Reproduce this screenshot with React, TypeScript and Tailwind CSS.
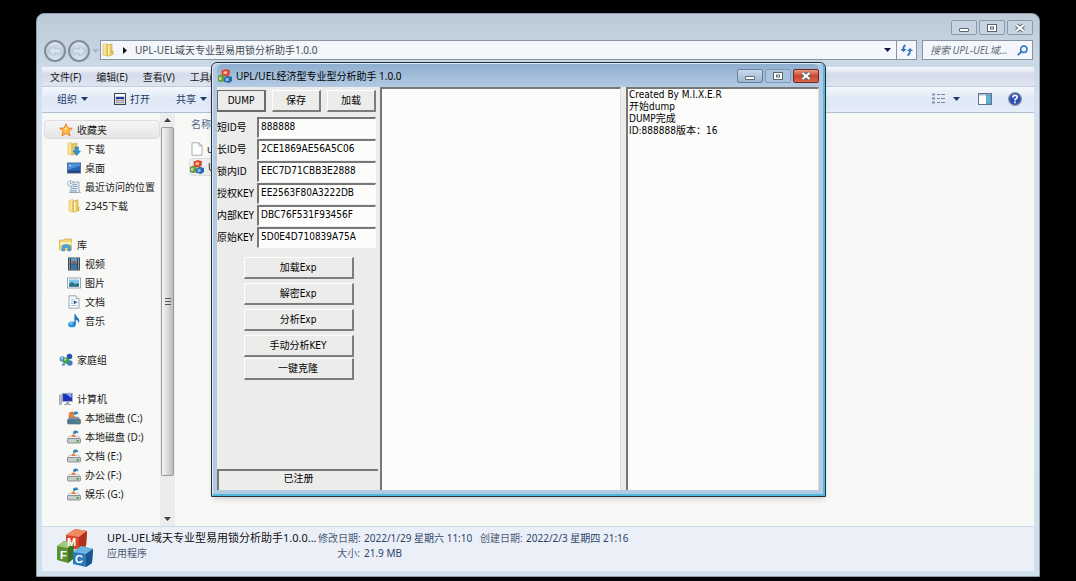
import { useState } from "react";
import type { ReactNode } from "react";

const UI_FONT = "font-['Noto_Sans','Noto_Sans_CJK_SC',sans-serif]";
const DIALOG_FONT = "font-['DejaVu_Sans_Condensed','Noto_Sans_CJK_SC',sans-serif]";

function MfcIcon({ className }: { className?: string }) {
  return (
    <svg viewBox="0 0 36 38" className={className} aria-hidden="true">
      <path d="M9 6 L18 0 L30 2 L29 17 L22 21 L9 18 Z" fill="#d9462a" />
      <path d="M9 6 L18 0 L30 2 L22 8 Z" fill="#f08b63" />
      <path d="M22 8 L30 2 L29 17 L22 21 Z" fill="#b3301c" />
      <path d="M0 17 L7 12 L17 14 L16 30 L11 34 L0 31 Z" fill="#5d9338" />
      <path d="M0 17 L7 12 L17 14 L11 19 Z" fill="#a3c876" />
      <path d="M11 19 L17 14 L16 30 L11 34 Z" fill="#3d6f27" />
      <path d="M16 23 L24 17 L36 20 L35 34 L29 38 L16 35 Z" fill="#2a7bb8" />
      <path d="M16 23 L24 17 L36 20 L29 25 Z" fill="#6cb5de" />
      <path d="M29 25 L36 20 L35 34 L29 38 Z" fill="#1a5590" />
      <g fill="#fff" fontFamily="Liberation Sans, sans-serif" fontWeight="bold" fontSize="11">
        <text x="10" y="17">M</text>
        <text x="3" y="30">F</text>
        <text x="18" y="34">C</text>
      </g>
    </svg>
  );
}

/* same cubes without letters, used at 14px */
function CubesIcon() {
  return (
    <svg viewBox="0 0 14 14" className="h-3.5 w-3.5 shrink-0" aria-hidden="true">
      <path d="M3.5 1.5 L8 0 L12 1.2 L11.5 6.2 L8 7.5 L3.8 6.5 Z" fill="#dc4a2c" />
      <path d="M5.5 2.5 L9 2 L9 5 L5.5 5 Z" fill="#f6b5a0" />
      <path d="M0 7 L3 5.5 L6.5 7 L6.5 12 L3 13 L0 12 Z" fill="#5f9a3c" />
      <path d="M1 8 L3.5 7.5 L3.5 11 L1 11 Z" fill="#b7d59a" />
      <path d="M6 9 L9.5 6.8 L14 8 L14 12 L11 14 L6 12.8 Z" fill="#2468ae" />
      <path d="M7.5 9.5 L10.5 8.5 L10.5 12 L7.5 12 Z" fill="#8fc1ea" />
    </svg>
  );
}

const svgProps = { viewBox: "0 0 14 14", className: "h-3.5 w-3.5 shrink-0", "aria-hidden": true } as const;

const StarIcon = () => (
  <svg {...svgProps}>
    <path d="M7 .8 L8.8 5 L13.3 5.3 L9.9 8.3 L11 12.8 L7 10.4 L3 12.8 L4.1 8.3 L.7 5.3 L5.2 5 Z" fill="#fcc04c" stroke="#e87f25" strokeWidth="1" />
    <path d="M7 3 L7.8 6 L5.5 7 Z" fill="#fff0b0" />
  </svg>
);

const FolderIcon = () => (
  <svg {...svgProps}>
    <path d="M2 1.5 L6 .5 L6 13 L2 12 Z" fill="#f8e59a" stroke="#d7b95a" strokeWidth=".6" />
    <path d="M6 2 L11 1 L11 12 L6 13.2 Z" fill="#eac862" stroke="#c9a447" strokeWidth=".6" />
    <path d="M7 3 L8.5 2.6 L8.5 12 L7 12.4 Z" fill="#fff3bd" />
    <path d="M11 7 L12.4 8 L12.4 12 L11 12 Z" fill="#ddb84e" />
  </svg>
);

const DownloadIcon = () => (
  <svg {...svgProps}>
    <path d="M1 1.5 L5 .5 L5 13 L1 12 Z" fill="#f8e59a" stroke="#d7b95a" strokeWidth=".6" />
    <path d="M5 2 L10 1 L10 12 L5 13 Z" fill="#eac862" stroke="#c9a447" strokeWidth=".6" />
    <path d="M8 5 H11.5 V9 H13.5 L9.8 13.6 L6 9 H8 Z" fill="#2f93dc" stroke="#1a6ab0" strokeWidth=".5" />
  </svg>
);

const DesktopIcon = () => (
  <svg {...svgProps}>
    <rect x=".5" y="2" width="13" height="10" fill="#2560b4" stroke="#59718f" />
    <path d="M1 2.5 H13 V5 L1 9 Z" fill="#4b90d8" />
    <rect x="1" y="10" width="12" height="1.5" fill="#203c66" />
    <rect x="2" y="4" width="2" height="1" fill="#d6ecff" />
  </svg>
);

const RecentIcon = () => (
  <svg {...svgProps}>
    <path d="M4 2 H12 V11 L13.5 12.5 H4 Z" fill="#dfe9f2" stroke="#8a9db0" strokeWidth=".8" />
    <path d="M6 4.5 H10 M6 6.5 H11 M5 8.5 H10" stroke="#7796b4" strokeWidth=".8" />
    <circle cx="3.5" cy="3.5" r="2.8" fill="#f5f8fb" stroke="#8c9aa8" strokeWidth=".8" />
    <path d="M3.5 2 V3.7 H4.8" fill="none" stroke="#55697d" strokeWidth=".6" />
    <path d="M2 12.5 H9 V10.5 H3" fill="#bccddd" stroke="#8a9db0" strokeWidth=".7" />
  </svg>
);

const LibraryIcon = () => (
  <svg {...svgProps}>
    <path d="M.5 2 H5 L6 1 H12.5 V12 H.5 Z" fill="#f1d678" stroke="#cfa948" strokeWidth=".7" />
    <rect x="1" y="4" width="11.5" height="3" fill="#faeeb5" />
    <path d="M3 13 V9 Q3 6.5 7 6.5 Q11.5 6.5 11.5 9 V13 H9 V9.5 H5.5 V13 Z" fill="#49a6dd" stroke="#2b7cb5" strokeWidth=".5" />
  </svg>
);

const VideoIcon = () => (
  <svg {...svgProps}>
    <rect x="1" y=".5" width="12" height="13" fill="#3f4851" />
    <rect x="4" y="1" width="6" height="5.5" fill="#5a9ecb" />
    <rect x="4" y="7.5" width="6" height="5.5" fill="#3b7aa8" />
    <path d="M4 6 L7 3.5 L10 6 Z" fill="#a54f34" />
    <path d="M2.5 1.5 V13 M11.5 1.5 V13" stroke="#d9dee2" strokeWidth="1" strokeDasharray="1 1" />
  </svg>
);

const PictureIcon = () => (
  <svg {...svgProps}>
    <rect x=".5" y="2" width="13" height="10" fill="#fff" stroke="#8d9ba8" strokeWidth=".9" />
    <rect x="2" y="3.5" width="10" height="7" fill="#7fc5ec" />
    <path d="M2 8 L5 5.8 L8 8 L12 7 V10.5 H2 Z" fill="#267c75" />
    <rect x="2" y="9.5" width="10" height="1" fill="#2564a0" />
  </svg>
);

const DocumentIcon = () => (
  <svg {...svgProps}>
    <path d="M2 .8 H9 L12 3.8 V13.2 H2 Z" fill="#f7fafc" stroke="#8592a0" strokeWidth=".8" />
    <path d="M9 .8 V3.8 H12" fill="#d7e1eb" stroke="#8592a0" strokeWidth=".6" />
    <path d="M4 4.5 H7 M4 6.5 H7 M4 8.5 H7 M4 10.5 H10" stroke="#9eb3c8" strokeWidth=".8" />
    <path d="M7 5.5 L10.5 7.2 L7 9 Z" fill="#24598f" />
  </svg>
);

const MusicIcon = () => (
  <svg {...svgProps}>
    <ellipse cx="5" cy="10.4" rx="3.8" ry="2.9" fill="#2793df" />
    <path d="M7.4 10.5 V.3 H8.6 Q8.8 2.6 11 4 Q13.4 6.4 11.4 9.8 Q11.8 6.4 8.8 5.4 V10.5 Z" fill="#1d6fc0" />
    <ellipse cx="4.2" cy="9.5" rx="1.7" ry="1" fill="#8fd2f8" />
  </svg>
);

const HomegroupIcon = () => (
  <svg {...svgProps}>
    <circle cx="3.3" cy="6" r="2.8" fill="#5a8fd8" />
    <circle cx="10.5" cy="3.5" r="2.8" fill="#2c4fb5" />
    <circle cx="10.8" cy="10" r="2.8" fill="#4478c8" />
    <circle cx="7" cy="7.6" r="3.2" fill="#37a045" />
    <circle cx="6.3" cy="6.6" r="1.2" fill="#b5e6a8" />
    <circle cx="2.8" cy="5.2" r="1" fill="#cfe2fa" />
    <circle cx="4.5" cy="11.5" r="1.6" fill="#6c97cf" />
  </svg>
);

const ComputerIcon = () => (
  <svg {...svgProps}>
    <rect x=".3" y="3" width="2.4" height="9.5" fill="#b8c2cc" stroke="#7e8b98" strokeWidth=".5" />
    <rect x="3.3" y="1.3" width="10.2" height="8.2" fill="#1d32b8" stroke="#aab6c2" strokeWidth=".9" />
    <path d="M7 2 H12.5 V6 Z" fill="#8ba5f2" />
    <path d="M7 10 H10 V12 H12 V13 H5 V12 H7 Z" fill="#9eabb8" />
  </svg>
);

const DriveIcon = ({ system }: { system?: boolean }) => (
  <svg {...svgProps}>
    {system && <path d="M2 1.5 L6 .3 V7 H1.5 Z" fill="#e5802d" />}
    <path d="M2.5 6 H11.5 L13.5 9 H.5 Z" fill={system ? "#6f97b8" : "#eef0f1"} stroke="#949b9f" strokeWidth=".5" />
    <rect x=".5" y="8.5" width="13" height="4.5" rx="1" fill={system ? "#4b7796" : "#c7cccd"} stroke="#697277" strokeWidth=".7" />
    <rect x="9.5" y="10" width="2.5" height="1.6" fill="#4aa13c" />
    <path d="M6 3.5 Q5.8 .4 8.8 .4 Q11.8 .6 11.2 3.5 Q9.7 2 8.5 4 Z" fill="#2f83bd" />
    <path d="M4 6.8 L6.5 3.8 L9 7 Z" fill="#e57a35" />
  </svg>
);

interface TreeItem {
  label: string;
  icon: ReactNode;
}

interface TreeGroup extends TreeItem {
  selected?: boolean;
  items: TreeItem[];
}

const TREE: TreeGroup[] = [
  {
    label: "收藏夹",
    icon: <StarIcon />,
    selected: true,
    items: [
      { label: "下载", icon: <DownloadIcon /> },
      { label: "桌面", icon: <DesktopIcon /> },
      { label: "最近访问的位置", icon: <RecentIcon /> },
      { label: "2345下载", icon: <FolderIcon /> },
    ],
  },
  {
    label: "库",
    icon: <LibraryIcon />,
    items: [
      { label: "视频", icon: <VideoIcon /> },
      { label: "图片", icon: <PictureIcon /> },
      { label: "文档", icon: <DocumentIcon /> },
      { label: "音乐", icon: <MusicIcon /> },
    ],
  },
  { label: "家庭组", icon: <HomegroupIcon />, items: [] },
  {
    label: "计算机",
    icon: <ComputerIcon />,
    items: [
      { label: "本地磁盘 (C:)", icon: <DriveIcon system /> },
      { label: "本地磁盘 (D:)", icon: <DriveIcon /> },
      { label: "文档 (E:)", icon: <DriveIcon /> },
      { label: "办公 (F:)", icon: <DriveIcon /> },
      { label: "娱乐 (G:)", icon: <DriveIcon /> },
    ],
  },
];

const FIELDS = [
  { id: "short-id", label: "短ID号", value: "888888" },
  { id: "long-id", label: "长ID号", value: "2CE1869AE56A5C06" },
  { id: "lock-id", label: "锁内ID", value: "EEC7D71CBB3E2888" },
  { id: "auth-key", label: "授权KEY", value: "EE2563F80A3222DB" },
  { id: "inner-key", label: "内部KEY", value: "DBC76F531F93456F" },
  { id: "origin-key", label: "原始KEY", value: "5D0E4D710839A75A" },
];

const LOG = "Created By M.I.X.E.R\n开始dump\nDUMP完成\nID:888888版本：16";

function Caret({ className = "text-[#1e3a6b]" }: { className?: string }) {
  return (
    <svg viewBox="0 0 7 4" className={`h-1 w-[7px] shrink-0 ${className}`} aria-hidden="true">
      <path d="M0 0 H7 L3.5 4 Z" fill="currentColor" />
    </svg>
  );
}

function CaptionGlyph({ kind }: { kind: "min" | "max" | "close" }) {
  return (
    <svg viewBox="0 0 12 10" className="h-2.5 w-3" aria-hidden="true">
      {kind === "min" && <rect x="1.5" y="5.5" width="9" height="3" rx=".5" fill="#fff" stroke="#5b6673" />}
      {kind === "max" && (
        <>
          <rect x="1.5" y="1.5" width="9" height="7" fill="#fff" stroke="#5b6673" />
          <rect x="4.5" y="4" width="3" height="2" fill="#fff" stroke="#5b6673" />
        </>
      )}
      {kind === "close" && (
        <>
          <path d="M2.5 2 L9.5 8 M9.5 2 L2.5 8" stroke="#5b6673" strokeWidth="4" />
          <path d="M2.5 2 L9.5 8 M9.5 2 L2.5 8" stroke="#fff" strokeWidth="2.2" />
        </>
      )}
    </svg>
  );
}

function NavButton({ label, flip }: { label: string; flip?: boolean }) {
  return (
    <button
      aria-label={label}
      className="flex h-[22px] w-[22px] items-center justify-center rounded-full border-2 border-[#7f8d9c] bg-linear-to-b from-[#dfe7ef] via-[#bccbda] to-[#dbe7f2]"
    >
      <svg viewBox="0 0 14 12" className="h-3 w-3.5" aria-hidden="true">
        <path
          d={flip ? "M13 6 L7.5 1 V4 H1 V8 H7.5 V11 Z" : "M1 6 L6.5 1 V4 H13 V8 H6.5 V11 Z"}
          fill="#d9e3ed"
          stroke="#b3c1cf"
          strokeWidth=".7"
        />
      </svg>
    </button>
  );
}

function Sidebar() {
  return (
    <aside className="flex w-[133px] shrink-0">
      <nav className="flex min-w-0 flex-1 flex-col gap-5 pt-[7px] pl-0.5">
        {TREE.map((group) => (
          <ul key={group.label}>
            <li
              className={
                group.selected
                  ? "flex h-[19px] items-center gap-1 rounded-sm border border-[#dcdcdc] bg-linear-to-b from-[#f6f6f6] to-[#e5e5e5] pl-3.5"
                  : "flex h-[19px] items-center gap-1 border border-transparent pl-3.5"
              }
            >
              {group.icon}
              {group.label}
            </li>
            {group.items.map((item) => (
              <li key={item.label} className="flex h-[19px] items-center gap-1 pl-[23px] whitespace-nowrap">
                {item.icon}
                {item.label}
              </li>
            ))}
          </ul>
        ))}
      </nav>
      <div className="flex w-[15px] flex-col items-center bg-[#ececec]">
        <span className="flex h-3.5 items-center">
          <Caret className="rotate-180 text-[#404040]" />
        </span>
        <div className="flex w-[13px] grow items-center justify-center rounded-xs border border-[#9a9a9a] bg-linear-to-r from-[#f5f5f5] via-[#dcdcdc] to-[#b9b9b9]">
          <div className="h-[7px] w-1.5 border-y border-[#555]">
            <div className="mt-0.5 h-px bg-[#555]" />
          </div>
        </div>
        <div className="h-9" />
        <span className="flex h-3.5 items-center">
          <Caret className="text-[#404040]" />
        </span>
      </div>
    </aside>
  );
}

function Explorer() {
  return (
    <section className="flex flex-1 flex-col rounded-t-lg border border-[#8f9daa] bg-linear-to-b from-[#bccad8] via-[#d5e1ee] via-15% to-[#cfdfec] px-[5px] pb-[5px] text-[#1a1a1a]">
      <div className="flex h-[26px] items-start justify-end gap-0.5 pt-1.5 pr-px">
        {(["min", "max", "close"] as const).map((kind) => (
          <button
            key={kind}
            aria-label={kind}
            className="flex h-[15px] w-[26px] items-center justify-center rounded-xs border border-[#8b9aab] bg-[#c6d3e1]"
          >
            <CaptionGlyph kind={kind} />
          </button>
        ))}
      </div>

      <div className="flex h-[27px] items-start gap-[5px] pr-px">
        <div className="flex items-center pl-0.5">
          <NavButton label="后退" />
          <span className="pl-0.5">
            <NavButton label="前进" flip />
          </span>
          <span className="pl-0.5">
            <Caret className="text-[#a8b6c5]" />
          </span>
        </div>
        <div className="-ml-1 flex h-5 flex-1 items-center border border-[#8794a3] bg-[#f3f6fa] text-[#444c55]">
          <span className="flex flex-1 items-center">
            <FolderIcon />
            <svg viewBox="0 0 4 7" className="mx-2 h-[7px] w-1" aria-hidden="true">
              <path d="M0 0 L4 3.5 L0 7 Z" fill="#111" />
            </svg>
            UPL-UEL域天专业型易用锁分析助手1.0.0
          </span>
          <button aria-label="展开" className="flex h-full w-[18px] items-center justify-center">
            <Caret className="text-[#14144a]" />
          </button>
          <button aria-label="刷新" className="flex h-full w-5 items-center justify-center border-l border-[#8794a3]">
            <svg viewBox="0 0 13 12" className="h-3 w-[13px]" aria-hidden="true">
              <path d="M5.5 1 Q3 2 3.5 7" fill="none" stroke="#2e6cb8" strokeWidth="1.8" />
              <path d="M.5 5 H6.5 L3.5 8 Z" fill="#2e6cb8" />
              <path d="M7.5 11.5 Q10.5 10 10 5.5" fill="none" stroke="#2e7cc8" strokeWidth="1.8" />
              <path d="M7 7 H13 L10 4 Z" fill="#2e7cc8" />
            </svg>
          </button>
        </div>
        <label className="flex h-5 w-[111px] items-center border border-[#8794a3] bg-[#f3f6fa] pr-1 pl-[7px]">
          <input
            aria-label="搜索"
            placeholder="搜索 UPL-UEL域..."
            className="min-w-0 flex-1 italic outline-none placeholder:text-[#66707a]"
          />
          <svg viewBox="0 0 11 11" className="h-[11px] w-[11px] shrink-0" aria-hidden="true">
            <circle cx="6.8" cy="4.2" r="3.2" fill="#e9f3fd" stroke="#3474bd" strokeWidth="1.5" />
            <path d="M4.4 6.6 L.8 10.2" stroke="#3474bd" strokeWidth="1.8" />
          </svg>
        </label>
      </div>

      <nav className="flex h-[19px] items-center gap-[15px] bg-linear-to-b from-[#f6f8fc] via-[#d5dbea] via-40% to-[#dfe4f0] pl-2">
        <button>文件(F)</button>
        <button>编辑(E)</button>
        <button>查看(V)</button>
        <button>工具(T)</button>
      </nav>

      <div className="flex h-[27px] items-center border-t border-b border-t-[#c3ccdb] border-b-[#b0bfd2] bg-linear-to-b from-[#f4f8fd] via-[#dfe8f5] to-[#e4edf8] pr-3 pb-0.5 pl-[15px] text-[#1e3a6b]">
        <button className="mr-[26px] flex items-center gap-1">
          组织 <Caret />
        </button>
        <button className="mr-[26px] flex items-center gap-1">
          <svg viewBox="0 0 12 12" className="h-3 w-3" aria-hidden="true">
            <rect x=".5" y=".5" width="11" height="11" fill="#fff" stroke="#38424e" />
            <rect x="2" y="4" width="8" height="6" fill="#c7cfdb" stroke="#57616e" strokeWidth=".6" />
            <rect x="2" y="4" width="8" height="2" fill="#1e3a9b" />
            <path d="M3.5 7.5 h1.5 M7 7.5 h1.5" stroke="#b93a2b" />
          </svg>
          打开
        </button>
        <button className="flex items-center gap-1">
          共享 <Caret />
        </button>
        <div className="ml-auto flex items-center">
          <button aria-label="更改视图" className="flex items-center gap-2">
            <svg viewBox="0 0 13 11" className="h-[11px] w-[13px]" aria-hidden="true">
              <path d="M0 1.5 H3 M0 5.5 H3 M0 9.5 H3" stroke="#8896a8" strokeWidth="2" />
              <path d="M5 1.5 H8 M9 1.5 H13 M5 5.5 H8 M9 5.5 H13 M5 9.5 H8 M9 9.5 H13" stroke="#7a8798" />
            </svg>
            <Caret />
          </button>
          <button aria-label="预览窗格" className="ml-[18px]">
            <svg viewBox="0 0 14 12" className="h-3 w-3.5" aria-hidden="true">
              <rect x=".5" y=".5" width="13" height="11" fill="#fff" stroke="#5f7488" />
              <rect x="1" y="1" width="12" height="1.5" fill="#a9bccd" />
              <rect x="8.5" y="2" width="4.5" height="9" fill="#62b3d8" stroke="#4286a8" strokeWidth=".6" />
            </svg>
          </button>
          <button aria-label="帮助" className="ml-4">
            <svg viewBox="0 0 14 14" className="h-3.5 w-3.5" aria-hidden="true">
              <circle cx="7" cy="7" r="6.4" fill="#2b4fae" stroke="#8a96ab" strokeWidth="1.2" />
              <path d="M4.8 5.6 Q4.8 3.4 7 3.4 Q9.3 3.4 9.2 5.3 Q9 6.6 7 7.4 V8.6 M7 9.6 V11.2" fill="none" stroke="#fff" strokeWidth="1.6" />
            </svg>
          </button>
        </div>
      </div>

      <div className="flex flex-1 bg-[#f8f8f6]">
        <Sidebar />
        <div className="pt-1 pl-3.5">
          <p className="h-[15px] pl-0.5 text-[#53688a]">名称</p>
          <ul className="pt-2">
            <li className="flex h-[18px] items-center gap-1 pl-0.5">
              <svg viewBox="0 0 12 14" className="h-3.5 w-3" aria-hidden="true">
                <path d="M1 .8 H8 L11 3.8 V13.2 H1 Z" fill="#fff" stroke="#9b9b9b" strokeWidth=".8" />
                <path d="M8 .8 V3.8 H11" fill="none" stroke="#9b9b9b" strokeWidth=".8" />
              </svg>
              u
            </li>
            <li className="flex h-[18px] items-center gap-1 rounded-sm border border-[#dcdcdc] bg-[#efefef]">
              <CubesIcon />U
            </li>
          </ul>
        </div>
      </div>

      <footer className="flex h-[45px] items-start border-t border-[#cdd8e6] bg-[#ebf0f8] pt-0.5 pl-[15px] text-[#4b5a75]">
        <MfcIcon className="h-[38px] w-9 shrink-0" />
        <div className="pl-3.5 leading-[15px]">
          <p className="w-[211px] text-[11px] leading-[17px] whitespace-nowrap text-[#111]">
            UPL-UEL域天专业型易用锁分析助手1.0.0...
          </p>
          <p>应用程序</p>
        </div>
        <dl className="grid grid-cols-[42px_112px_42px_auto] gap-x-1 pt-0.5 leading-[15px] whitespace-nowrap">
          <dt className="text-right">修改日期:</dt>
          <dd className="text-[#2c4269]">2022/1/29 星期六 11:10</dd>
          <dt className="text-right">创建日期:</dt>
          <dd className="text-[#2c4269]">2022/2/3 星期四 21:16</dd>
          <dt className="text-right">大小:</dt>
          <dd className="text-[#2c4269]">21.9 MB</dd>
        </dl>
      </footer>
    </section>
  );
}

function PushButton({ children, active, wide }: { children: ReactNode; active?: boolean; wide?: boolean }) {
  return (
    <button
      className={`h-[22px] border-t border-l border-r-2 border-b-2 bg-[#ececea] ${
        active ? "border-[#6a6a6a]" : "border-t-white border-r-[#7d7d7d] border-b-[#7d7d7d] border-l-white"
      } ${wide ? "w-[110px]" : "w-[49px]"}`}
    >
      {children}
    </button>
  );
}

function AnalyzerDialog() {
  const [values, setValues] = useState(() => FIELDS.map((f) => f.value));

  return (
    <section
      className={`absolute top-[62px] left-[211px] flex h-[435px] w-[615px] flex-col rounded-t-md border border-[#26333f] bg-[#b4cae3] text-black shadow-md ${DIALOG_FONT}`}
    >
      <div className="flex flex-1 flex-col rounded-t-md border-t border-r-2 border-b-2 border-l border-t-[#dce9f5] border-r-[#4fb9dc] border-b-[#4fb9dc] border-l-[#dce9f5] px-1 pb-1">
        <header className={`flex h-[23px] items-center gap-1 rounded-t-md bg-linear-to-b from-[#8fafd0] to-[#b4cae3] pl-px ${UI_FONT}`}>
          <CubesIcon />
          <h1 className="flex-1">UPL/UEL经济型专业型分析助手 1.0.0</h1>
          <div className="flex gap-0.5">
            <button aria-label="最小化" className="flex h-3.5 w-[26px] items-center justify-center rounded-xs border border-[#687f99] bg-linear-to-b from-[#c9d9ea] to-[#9bb6d2]">
              <CaptionGlyph kind="min" />
            </button>
            <button aria-label="最大化" className="flex h-3.5 w-[26px] items-center justify-center rounded-xs border border-[#8199b5] bg-[#aac3de]">
              <CaptionGlyph kind="max" />
            </button>
            <button aria-label="关闭" className="flex h-3.5 w-[26px] items-center justify-center rounded-xs border border-[#6d2a20] bg-linear-to-b from-[#e39a86] via-[#c9452c] to-[#d7694b]">
              <CaptionGlyph kind="close" />
            </button>
          </div>
        </header>

        <div className="flex flex-1 bg-[#ececea]">
          <div className="flex w-[163px] shrink-0 flex-col">
            <div className="flex justify-between pt-[3px] pr-1">
              <PushButton active>DUMP</PushButton>
              <PushButton>保存</PushButton>
              <PushButton>加载</PushButton>
            </div>
            <form className="flex flex-col gap-px pt-[5px] pr-1">
              {FIELDS.map((field, i) => (
                <div key={field.id} className="flex h-[21px] items-center">
                  <label htmlFor={field.id} className="w-10 shrink-0 whitespace-nowrap">
                    {field.label}
                  </label>
                  <input
                    id={field.id}
                    value={values[i]}
                    onChange={(e) => setValues(values.map((v, n) => (n === i ? e.target.value : v)))}
                    className="h-full min-w-0 flex-1 border-t-2 border-r border-b border-l-2 border-t-[#777] border-r-white border-b-white border-l-[#777] bg-[#fcfcfb] pb-1 pl-0.5 outline-none"
                  />
                </div>
              ))}
            </form>
            <div className="flex flex-col items-center gap-1 pt-[9px]">
              <PushButton wide>加载Exp</PushButton>
              <PushButton wide>解密Exp</PushButton>
              <PushButton wide>分析Exp</PushButton>
              <div className="flex flex-col gap-px">
                <PushButton wide>手动分析KEY</PushButton>
                <PushButton wide>一键克隆</PushButton>
              </div>
            </div>
            <p className="mt-auto mr-0.5 h-[21px] border-t-2 border-l-2 border-[#777] text-center leading-4">已注册</p>
          </div>
          <textarea
            aria-label="数据"
            className="min-w-0 flex-1 resize-none border-t-2 border-r border-l-2 border-t-[#777] border-r-[#ddd] border-l-[#777] bg-[#fcfcfb] outline-none"
          />
          <textarea
            aria-label="日志"
            readOnly
            value={LOG}
            className="ml-[5px] w-[193px] shrink-0 resize-none border-t-2 border-r border-l-2 border-t-[#777] border-r-[#ddd] border-l-[#777] bg-[#fcfcfb] pl-px leading-3 outline-none"
          />
        </div>
      </div>
    </section>
  );
}

export default function App() {
  return (
    <main className={`relative flex min-h-screen flex-col bg-black px-9 pt-[13px] pb-1 text-[10px] leading-[14px] ${UI_FONT}`}>
      <Explorer />
      <AnalyzerDialog />
    </main>
  );
}
